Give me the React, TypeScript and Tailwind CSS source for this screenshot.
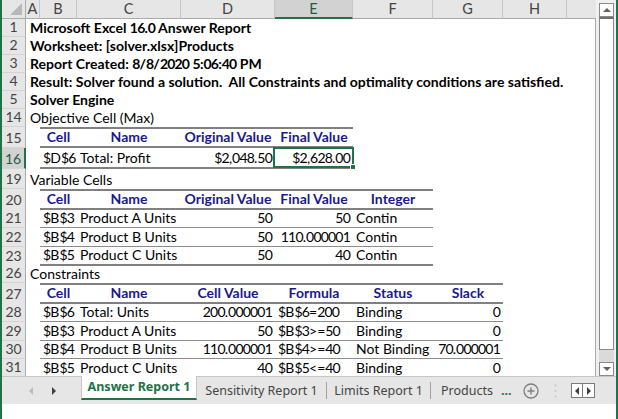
import React from "react";

type Cell = { t: string; al: "l" | "r" | "c" };
type Row = {
  n: number;
  h: string;
  title?: string;
  bold?: boolean;
  head?: boolean;
  top?: boolean;
  bot?: "thin" | "thick" | "none";
  sel?: boolean;
  cells?: Cell[];
};

const GRID = "grid grid-cols-[24px_14px_37px_104px_94px_78px_80px_70px_64px_1fr]";
const LETTERS = ["A", "B", "C", "D", "E", "F", "G", "H", ""];

const l = (t: string): Cell => ({ t, al: "l" });
const r = (t: string): Cell => ({ t, al: "r" });
const c = (t: string): Cell => ({ t, al: "c" });

const rows: Row[] = [
  { n: 1, h: "h-[18px]", title: "Microsoft Excel 16.0 Answer Report", bold: true },
  { n: 2, h: "h-[18px]", title: "Worksheet: [solver.xlsx]Products", bold: true },
  { n: 3, h: "h-[18px]", title: "Report Created: 8/8/2020 5:06:40 PM", bold: true },
  {
    n: 4,
    h: "h-[18px]",
    title: "Result: Solver found a solution.  All Constraints and optimality conditions are satisfied.",
    bold: true,
  },
  { n: 5, h: "h-[18px]", title: "Solver Engine", bold: true },
  { n: 14, h: "h-[18px]", title: "Objective Cell (Max)" },
  {
    n: 15,
    h: "h-[21px]",
    head: true,
    top: true,
    bot: "thick",
    cells: [c("Cell"), c("Name"), c("Original Value"), c("Final Value")],
  },
  {
    n: 16,
    h: "h-[21px]",
    bot: "thick",
    sel: true,
    cells: [l("$D$6"), l("Total: Profit"), r("$2,048.50"), r("$2,628.00")],
  },
  { n: 19, h: "h-[20px]", title: "Variable Cells" },
  {
    n: 20,
    h: "h-[20px]",
    head: true,
    top: true,
    bot: "thick",
    cells: [c("Cell"), c("Name"), c("Original Value"), c("Final Value"), c("Integer")],
  },
  {
    n: 21,
    h: "h-[19px]",
    bot: "thin",
    cells: [l("$B$3"), l("Product A Units"), r("50"), r("50"), l("Contin")],
  },
  {
    n: 22,
    h: "h-[19px]",
    bot: "thin",
    cells: [l("$B$4"), l("Product B Units"), r("50"), r("110.000001"), l("Contin")],
  },
  {
    n: 23,
    h: "h-[18px]",
    bot: "thick",
    cells: [l("$B$5"), l("Product C Units"), r("50"), r("40"), l("Contin")],
  },
  { n: 26, h: "h-[18px]", title: "Constraints" },
  {
    n: 27,
    h: "h-[20px]",
    head: true,
    top: true,
    bot: "thick",
    cells: [c("Cell"), c("Name"), c("Cell Value"), c("Formula"), c("Status"), c("Slack")],
  },
  {
    n: 28,
    h: "h-[19px]",
    bot: "thin",
    cells: [l("$B$6"), l("Total: Units"), r("200.000001"), l("$B$6=200"), l("Binding"), r("0")],
  },
  {
    n: 29,
    h: "h-[19px]",
    bot: "thin",
    cells: [l("$B$3"), l("Product A Units"), r("50"), l("$B$3>=50"), l("Binding"), r("0")],
  },
  {
    n: 30,
    h: "h-[18px]",
    bot: "thin",
    cells: [l("$B$4"), l("Product B Units"), r("110.000001"), l("$B$4>=40"), l("Not Binding"), r("70.000001")],
  },
  {
    n: 31,
    h: "h-[17px]",
    bot: "none",
    cells: [l("$B$5"), l("Product C Units"), r("40"), l("$B$5<=40"), l("Binding"), r("0")],
  },
];

// Lato digits are wider than Calibri's, so tighten them a little
const Txt = ({ t }: { t: string }) => (
  <span>
    {t.split(/([0-9$]+)/).map((p, i) =>
      /[0-9$]/.test(p) ? (
        <span key={i} className="tracking-[-0.8px]">
          {p}
        </span>
      ) : (
        p
      )
    )}
  </span>
);

function SheetRow({ row }: { row: Row }) {
  return (
    <div className={`${GRID} ${row.h}`}>
      <div
        className={`flex items-end justify-center pb-[1px] border-b border-b-[#d4d4d4] ${
          row.sel
            ? "bg-[#d2d2d2] border-r-2 border-r-[#217346] text-[#1e5e3a]"
            : "bg-[#e6e6e6] border-r border-r-[#ababab] text-[#444]"
        }`}
      >
        {row.n}
      </div>
      {row.title ? (
        <div
          className={`col-span-9 flex items-end pl-[4px] pb-[1px] whitespace-pre ${
            row.bold ? "font-bold" : ""
          }`}
        >
          <Txt t={row.title} />
        </div>
      ) : (
        <>
          <div />
          {Array.from({ length: 8 }).map((_, i) => {
            const cell = row.cells && i < row.cells.length ? row.cells[i] : null;
            if (!cell) return <div key={i} />;
            const border = [
              row.top ? "border-t-2 border-t-[#808080]" : "",
              row.bot === "thick"
                ? "border-b-2 border-b-[#808080]"
                : row.bot === "thin"
                ? "border-b border-b-[#8c8c8c]"
                : "",
            ].join(" ");
            const align =
              cell.al === "l" ? "justify-start pl-[3px]" : cell.al === "r" ? "justify-end pr-[3px]" : "justify-center";
            return (
              <div
                key={i}
                className={`relative flex items-end pb-[1px] whitespace-nowrap ${align} ${border} ${
                  row.head ? "font-bold text-[#1a1a8c]" : ""
                }`}
              >
                <Txt t={cell.t} />
                {row.sel && i === 3 && (
                  <div className="absolute -left-[2px] -top-[1px] -right-[1px] -bottom-[1px] border-2 border-[#217346]">
                    <div className="absolute -right-[4px] -bottom-[4px] w-[6px] h-[6px] bg-[#217346] border border-white" />
                  </div>
                )}
              </div>
            );
          })}
        </>
      )}
    </div>
  );
}

const Tri = ({ dir, color }: { dir: "l" | "r" | "u" | "d"; color: string }) => {
  const pts = { l: "5,0 5,8 1,4", r: "1,0 1,8 5,4", u: "0,5 8,5 4,1", d: "0,1 8,1 4,5" }[dir];
  const vertical = dir === "u" || dir === "d";
  return (
    <svg width={vertical ? 8 : 6} height={vertical ? 6 : 8} viewBox={vertical ? "0 0 8 6" : "0 0 6 8"}>
      <polygon points={pts} fill={color} />
    </svg>
  );
};

export default function App() {
  return (
    <div className="w-[618px] h-[419px] overflow-hidden bg-white border-x-2 border-[#217346] flex flex-col font-['Lato',sans-serif] text-[14px] leading-[16px] text-black">
      <div className="flex h-[376px]">
        {/* sheet */}
        <div className="w-[594px] flex flex-col">
          <div className={`${GRID} h-[19px] bg-[#e6e6e6] text-[14.5px]`}>
            <div className="relative border-r border-b border-[#ababab]">
              <svg className="absolute right-[3px] bottom-[3px]" width="12" height="12" viewBox="0 0 12 12">
                <polygon points="12,0 12,12 0,12" fill="#b8b8b8" />
              </svg>
            </div>
            {LETTERS.map((ch, i) => (
              <div
                key={i}
                className={`flex items-center justify-center ${i < 8 ? "border-r border-r-[#c6c6c6]" : ""} ${
                  ch === "E"
                    ? "bg-[#d2d2d2] border-b-2 border-b-[#217346] text-[#1e5e3a]"
                    : "border-b border-b-[#ababab] text-[#444]"
                }`}
              >
                {ch}
              </div>
            ))}
          </div>
          <div className="flex-1 overflow-hidden border-r border-[#ababab]">
            {rows.map((row) => (
              <SheetRow key={row.n} row={row} />
            ))}
          </div>
        </div>

        {/* vertical scrollbar */}
        <div className="w-[20px] bg-[#f0f0f0] flex flex-col pl-[3px] pr-[2px] pt-[3px]">
          <div className="h-[14px] bg-white border border-[#8a8a8a] flex items-center justify-center">
            <Tri dir="u" color="#606060" />
          </div>
          <div className="h-[333px] bg-white border border-[#8a8a8a] border-t-2 border-t-[#6f6f6f]" />
          <div className="flex-1 bg-[#dadada]" />
          <div className="h-[14px] bg-white border border-[#8a8a8a] flex items-center justify-center">
            <Tri dir="d" color="#606060" />
          </div>
        </div>
      </div>

      {/* sheet tabs */}
      <div className="h-[28px] bg-[#e6e6e6] border-t border-[#c6c6c6] flex font-['Noto_Sans',sans-serif] text-[12.5px] text-[#444]">
        <div className="w-[79px] flex items-center pl-[26px] gap-[17px]">
          <Tri dir="l" color="#bdbdbd" />
          <Tri dir="r" color="#404040" />
        </div>
        <div className="w-[116px] h-[24px] -mt-px bg-white border-x border-[#c6c6c6] border-b-2 border-b-[#217346] flex items-center justify-center font-bold text-[#217346]">
          Answer Report 1
        </div>
        <div className="w-[129px] flex items-center justify-center">Sensitivity Report 1</div>
        <div className="w-px h-[17px] self-center bg-[#a0a0a0]" />
        <div className="w-[103px] flex items-center justify-center">Limits Report 1</div>
        <div className="w-px h-[17px] self-center bg-[#a0a0a0]" />
        <div className="w-[85px] flex items-center pl-[10px]">
          Products
          <span className="ml-[8px] font-bold text-[#217346]">...</span>
        </div>
        <div className="w-[30px] flex items-center justify-center">
          <svg width="16" height="16" viewBox="0 0 16 16">
            <circle cx="8" cy="8" r="7" fill="none" stroke="#7f7f7f" strokeWidth="1.3" />
            <path d="M8 4.5v7M4.5 8h7" stroke="#7f7f7f" strokeWidth="1.4" />
          </svg>
        </div>
        <div className="w-[18px] flex items-center justify-center">
          <svg width="3" height="14" viewBox="0 0 3 14">
            <circle cx="1.5" cy="1.5" r="1" fill="#c4c4c4" />
            <circle cx="1.5" cy="7" r="1" fill="#c4c4c4" />
            <circle cx="1.5" cy="12.5" r="1" fill="#c4c4c4" />
          </svg>
        </div>
        <div className="ml-[7px] self-center flex h-[15px] w-[24px] bg-white border border-[#7a7a7a]">
          <div className="w-[11px] flex items-center justify-center border-r border-[#7a7a7a]">
            <Tri dir="l" color="#404040" />
          </div>
          <div className="flex-1 flex items-center justify-center">
            <Tri dir="r" color="#404040" />
          </div>
        </div>
      </div>
      <div className="flex-1 bg-white" />
    </div>
  );
}
